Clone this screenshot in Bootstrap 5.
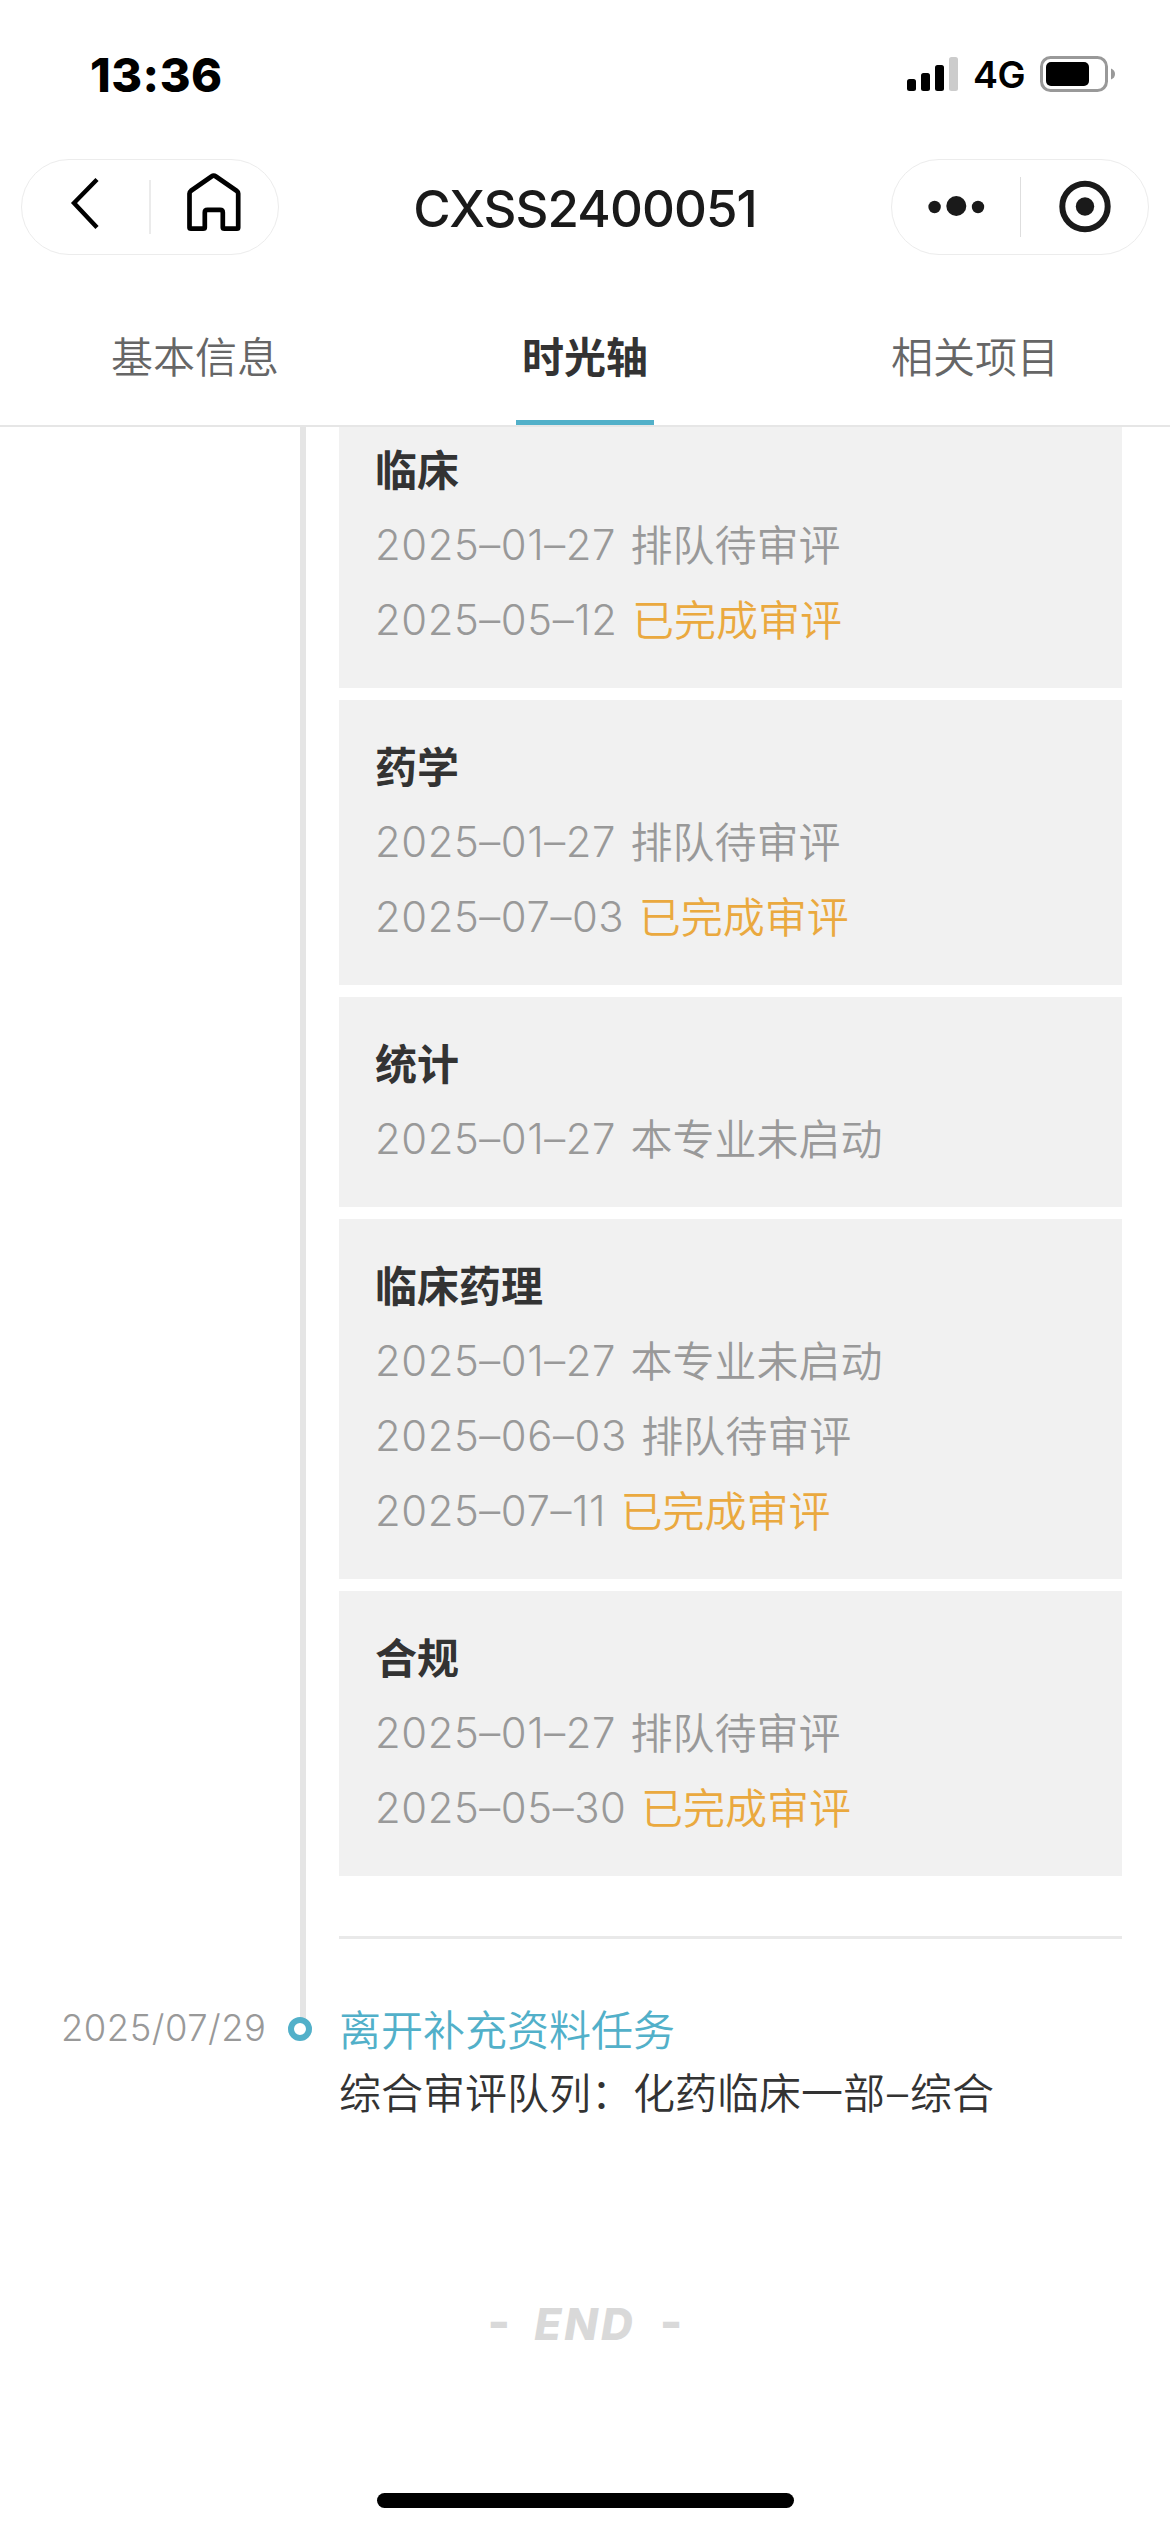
<!DOCTYPE html>
<html lang="zh-CN">
<head>
<meta charset="utf-8">
<meta name="viewport" content="width=device-width, initial-scale=1">
<title>CXSS2400051</title>
<link rel="stylesheet" href="https://cdn.jsdelivr.net/npm/bootstrap@5.3.0/dist/css/bootstrap.min.css">
<style>
body{width:1170px;height:2532px;overflow:hidden;background:#fff;color:#333;font-family:Inter,"Noto Sans CJK SC",sans-serif;font-size:42px}
svg{display:block;flex:none}
.status-row{height:159px;padding:0 54px 11px 90px;color:#000}
.clock{font-size:47px;font-weight:800;line-height:1;letter-spacing:.5px}
.net{font-size:37.5px;font-weight:600;line-height:1;letter-spacing:-.5px;margin:2px 15px 0 14px}
.title-row{height:96px;padding:0 21px}
.capsule{width:258px;height:96px;border:1px solid #ececec}
.page-name{font-size:51px;font-weight:500;letter-spacing:-.9px;color:#1a1a1a;line-height:1;padding-top:2px}
.tabs-row{height:172px;border-bottom:2px solid #e6e6e6}
.tabs-row .nav-link{padding:0;height:170px;padding-top:34px;color:#666;display:flex;justify-content:center;font-family:"Noto Sans CJK SC",sans-serif;font-weight:350;line-height:132px}
.tabs-row .nav-link.active{color:#333;font-weight:700}
.tabs-row .nav-link.active span{height:136px;width:138px;text-align:center;border-bottom:5px solid #52b0c9}
.timeline{height:1800px}
.rail-left{width:339px;position:relative}
.rail-line{position:absolute;left:300px;top:0;width:6px;height:1592px;background:#e5e5e5}
.rail-dot{position:absolute;left:288px;top:1590px;width:24px;height:24px;border:6px solid #52b0c9;background:#fff}
.rail-date{padding:1579px 0 0 61px;font-size:36.4px;line-height:44px;font-weight:350;letter-spacing:.5px;color:#999;white-space:nowrap}
.events{width:783px;margin-top:-24px}
.stage{background:#f1f1f1;padding:30px 36px;margin-bottom:12px}
.stage h2,.stage p{font-size:42px;line-height:75px;height:75px;margin:0;white-space:nowrap}
.stage h2{font-weight:700;color:#333;font-family:"Noto Sans CJK SC",sans-serif;line-height:69px}
.stage p{color:#999;display:flex;gap:14.5px}
.stage time{font-size:41.8px;font-weight:350;letter-spacing:.6px}
.stage p span,.cjk{font-family:"Noto Sans CJK SC",sans-serif;font-weight:350}
.stage p span{line-height:69px}
.stage .done{color:#eaa93f}
.rule{height:3px;background:#e9e9e9;margin-top:60px}
.task{padding-top:57px;line-height:63px;white-space:nowrap}
.task>div{height:63px}
.task .link-name{color:#52b0c9}
.dash{font-family:Inter,sans-serif;padding:0 2px}
.the-end{font-weight:800;font-size:44px;color:#d9d9d9;line-height:60px;padding-top:67px;gap:24px}
.the-end .fst-italic{letter-spacing:3px}
.the-end .end-dash{font-size:48px;line-height:56px}
.home-bar{width:417px;height:15px;background:#000;margin:139px auto 0}
</style>
<script src="https://cdn.jsdelivr.net/npm/bootstrap@5.3.0/dist/js/bootstrap.bundle.min.js"></script>
</head>
<body>
<header>
  <div class="status-row d-flex align-items-center justify-content-between">
    <span class="clock">13:36</span>
    <div class="d-flex align-items-center">
      <svg width="52" height="36" viewBox="0 0 52 36"><rect x="0" y="23" width="9" height="12" rx="2.5"/><rect x="14" y="17" width="9" height="18" rx="2.5"/><rect x="28" y="9" width="9" height="26" rx="2.5"/><rect x="42" y="1" width="9" height="34" rx="2.5" fill="#ccc"/></svg>
      <span class="net">4G</span>
      <svg width="76" height="36" viewBox="0 0 76 36"><rect x="1.5" y="1.5" width="65" height="33" rx="9" fill="none" stroke="#999" stroke-width="3"/><rect x="6" y="6" width="43" height="24" rx="5"/><path d="M71 12.500q4 1.500 4 5.500t-4 5.500z" fill="#999"/></svg>
    </div>
  </div>
  <div class="title-row d-flex align-items-center justify-content-between">
    <div class="capsule rounded-pill">
      <svg width="256" height="94" viewBox="22 160 256 94" fill="none" stroke="#000"><path d="M97 179.500L74 203l23 24.500" stroke-width="4.400"/><path d="M150 180v54" stroke="#ebebeb" stroke-width="2"/><path d="M189.500 193.500q0-1.500 1.500-2.700L211.500 176.500q2.200-1.600 4.400 0L236.500 190.800q1.700 1.200 1.700 2.700V227.500q0 1.200-1.200 1.200H224.500q-1.700 0-1.700-1.200V212.500q0-2.700-2.700-2.700H207.500q-2.700 0-2.700 2.700V227.500q0 1.200-1.700 1.200H191q-1.500 0-1.500-1.200z" stroke-width="4.700" stroke-linejoin="round"/></svg>
    </div>
    <span class="page-name">CXSS2400051</span>
    <div class="capsule rounded-pill">
      <svg width="256" height="94" viewBox="892 160 256 94" fill="#1a1a1a"><circle cx="934.600" cy="207" r="6.200"/><circle cx="956.300" cy="206" r="10"/><circle cx="978" cy="207" r="6.200"/><path d="M1020.500 177v60" stroke="#dedede"/><circle cx="1085" cy="206.500" r="22.700" fill="none" stroke="#1a1a1a" stroke-width="6"/><circle cx="1085" cy="206.500" r="9.200"/></svg>
    </div>
  </div>
  <nav class="tabs-row nav nav-fill flex-nowrap">
    <a class="nav-link w-100"><span>基本信息</span></a>
    <a class="nav-link active w-100"><span>时光轴</span></a>
    <a class="nav-link w-100"><span>相关项目</span></a>
  </nav>
</header>
<main class="timeline d-flex overflow-hidden">
  <div class="rail-left">
    <div class="rail-line"></div>
    <div class="rail-dot rounded-circle"></div>
    <div class="rail-date">2025/07/29</div>
  </div>
  <div class="events">
    <section class="stage"><h2>临床</h2><p><time>2025–01–27</time> <span>排队待审评</span></p><p><time>2025–05–12</time> <span class="done">已完成审评</span></p></section>
    <section class="stage"><h2>药学</h2><p><time>2025–01–27</time> <span>排队待审评</span></p><p><time>2025–07–03</time> <span class="done">已完成审评</span></p></section>
    <section class="stage"><h2>统计</h2><p><time>2025–01–27</time> <span>本专业未启动</span></p></section>
    <section class="stage"><h2>临床药理</h2><p><time>2025–01–27</time> <span>本专业未启动</span></p><p><time>2025–06–03</time> <span>排队待审评</span></p><p><time>2025–07–11</time> <span class="done">已完成审评</span></p></section>
    <section class="stage mb-0"><h2>合规</h2><p><time>2025–01–27</time> <span>排队待审评</span></p><p><time>2025–05–30</time> <span class="done">已完成审评</span></p></section>
    <div class="rule"></div>
    <div class="task cjk"><div class="link-name">离开补充资料任务</div><div>综合审评队列：化药临床一部<span class="dash">–</span>综合</div></div>
  </div>
</main>
<footer>
  <div class="the-end d-flex justify-content-center"><span class="end-dash">-</span><span class="fst-italic">END</span><span class="end-dash">-</span></div>
  <div class="home-bar rounded-pill"></div>
</footer>
</body>
</html>
